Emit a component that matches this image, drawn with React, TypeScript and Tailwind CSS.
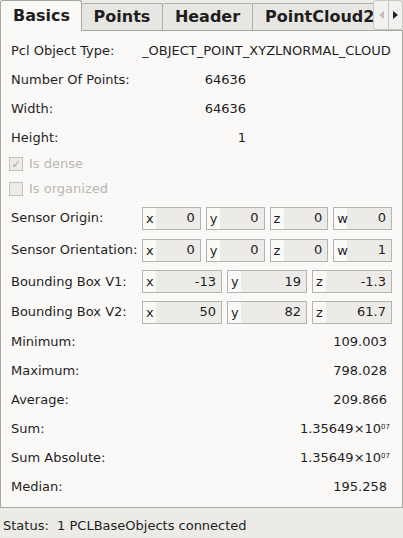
const font = { fontFamily: '"DejaVu Sans", "Liberation Sans", sans-serif' };

type Spin = { p: string; v: string };

function SpinBox({ p, v }: Spin) {
  return (
    <div className="flex h-[23px] flex-1 items-stretch border border-[#b6b4b1] bg-[#edebe8]">
      <span className="flex w-[13px] items-center bg-[#fbf9f7] pl-[3px] leading-none">{p}</span>
      <span className="flex flex-1 items-center justify-end pr-[5px]">{v}</span>
    </div>
  );
}

function Row({ label, h, children }: { label: string; h: string; children?: React.ReactNode }) {
  return (
    <div className={`flex items-center ${h}`}>
      <div className="w-[141px] shrink-0 whitespace-nowrap pl-[10px]">{label}</div>
      <div className="flex w-[250px] items-center">{children}</div>
    </div>
  );
}

function Check({ label, checked, h }: { label: string; checked?: boolean; h: string }) {
  return (
    <div className={`flex items-center gap-[6px] pl-[8px] text-[#b9b7b4] ${h}`}>
      <span className="flex h-[14px] w-[14px] items-center justify-center border border-[#c4c2bf] bg-[#edebe8] text-[11px] leading-none text-[#a9a7a4]">
        {checked ? "✓" : ""}
      </span>
      <span>{label}</span>
    </div>
  );
}

function Sci({ m, e }: { m: string; e: string }) {
  return (
    <span className="whitespace-nowrap">
      {m}×10<span className="relative top-[-4px] text-[7px]">{e}</span>
    </span>
  );
}

export default function App() {
  const tabs = [
    { name: "Points", w: "w-[81px]" },
    { name: "Header", w: "w-[90px]" },
  ];

  const stats = [
    { label: "Minimum:", value: "109.003" },
    { label: "Maximum:", value: "798.028" },
    { label: "Average:", value: "209.866" },
  ];

  return (
    <div className="flex h-[538px] w-[403px] flex-col overflow-hidden bg-[#edebe8] text-[13px] text-[#1e1e1e]" style={font}>
      {/* Tab bar */}
      <div className="relative z-10 flex h-[30px] items-end">
        <div className="-mb-px flex h-[31px] w-[82px] items-center rounded-t-[3px] border border-b-0 border-[#a8a6a3] bg-[#fbf9f7] pl-[12px] text-[16px] font-bold">
          Basics
        </div>
        {tabs.map((t) => (
          <div
            key={t.name}
            className={`flex h-[27px] ${t.w} items-center justify-center rounded-t-[2px] border border-b-0 border-l-0 border-[#b0aeab] bg-[#e8e6e3] text-[16px] font-bold`}
          >
            {t.name}
          </div>
        ))}
        <div className="flex h-[27px] flex-1 items-center overflow-hidden whitespace-nowrap border-t border-[#b0aeab] bg-[#e8e6e3] pl-[12px] text-[16px] font-bold">
          PointCloud2
        </div>
        <div className="flex h-[30px] self-start">
          <div className="flex w-[16px] items-center justify-center rounded-l-[3px] border border-[#c8c6c3] bg-[#f3f1ef]">
            <svg width="5" height="8" viewBox="0 0 5 8">
              <path d="M5 0 L0 4 L5 8 Z" fill="#c2c0bd" />
            </svg>
          </div>
          <div className="flex w-[14px] items-center justify-center rounded-r-[3px] border border-l-0 border-[#c8c6c3] bg-[#f3f1ef]">
            <svg width="5" height="8" viewBox="0 0 5 8">
              <path d="M0 0 L5 4 L0 8 Z" fill="#1e1e1e" />
            </svg>
          </div>
        </div>
      </div>

      {/* Panel */}
      <div className="flex h-[478px] flex-col border border-[#a8a6a3] bg-[#fbf9f7] pt-[5px]">
        <Row label="Pcl Object Type:" h="h-[29px]">
          <span className="overflow-hidden whitespace-nowrap">_OBJECT_POINT_XYZLNORMAL_CLOUD</span>
        </Row>
        <Row label="Number Of Points:" h="h-[29px]">
          <span className="w-[104px] text-right">64636</span>
        </Row>
        <Row label="Width:" h="h-[29px]">
          <span className="w-[104px] text-right">64636</span>
        </Row>
        <Row label="Height:" h="h-[29px]">
          <span className="w-[104px] text-right">1</span>
        </Row>
        <Check label="Is dense" checked h="h-[24px]" />
        <Check label="Is organized" h="h-[26px]" />
        <Row label="Sensor Origin:" h="h-[32px]">
          <div className="flex w-full gap-[5px]">
            <SpinBox p="x" v="0" />
            <SpinBox p="y" v="0" />
            <SpinBox p="z" v="0" />
            <SpinBox p="w" v="0" />
          </div>
        </Row>
        <Row label="Sensor Orientation:" h="h-[32px]">
          <div className="flex w-full gap-[5px]">
            <SpinBox p="x" v="0" />
            <SpinBox p="y" v="0" />
            <SpinBox p="z" v="0" />
            <SpinBox p="w" v="1" />
          </div>
        </Row>
        <Row label="Bounding Box V1:" h="h-[31px]">
          <div className="flex w-full gap-[5px]">
            <SpinBox p="x" v="-13" />
            <SpinBox p="y" v="19" />
            <SpinBox p="z" v="-1.3" />
          </div>
        </Row>
        <Row label="Bounding Box V2:" h="h-[30px]">
          <div className="flex w-full gap-[5px]">
            <SpinBox p="x" v="50" />
            <SpinBox p="y" v="82" />
            <SpinBox p="z" v="61.7" />
          </div>
        </Row>
        {stats.map((s) => (
          <Row key={s.label} label={s.label} h="h-[29px]">
            <span className="w-full pr-[5px] text-right">{s.value}</span>
          </Row>
        ))}
        <Row label="Sum:" h="h-[29px]">
          <span className="w-full pr-[2px] text-right">
            <Sci m="1.35649" e="07" />
          </span>
        </Row>
        <Row label="Sum Absolute:" h="h-[29px]">
          <span className="w-full pr-[2px] text-right">
            <Sci m="1.35649" e="07" />
          </span>
        </Row>
        <Row label="Median:" h="h-[29px]">
          <span className="w-full pr-[5px] text-right">195.258</span>
        </Row>
      </div>

      {/* Status bar */}
      <div className="flex h-[30px] items-center pl-[3px] pt-[5px]">Status:&nbsp; 1 PCLBaseObjects connected</div>
    </div>
  );
}
